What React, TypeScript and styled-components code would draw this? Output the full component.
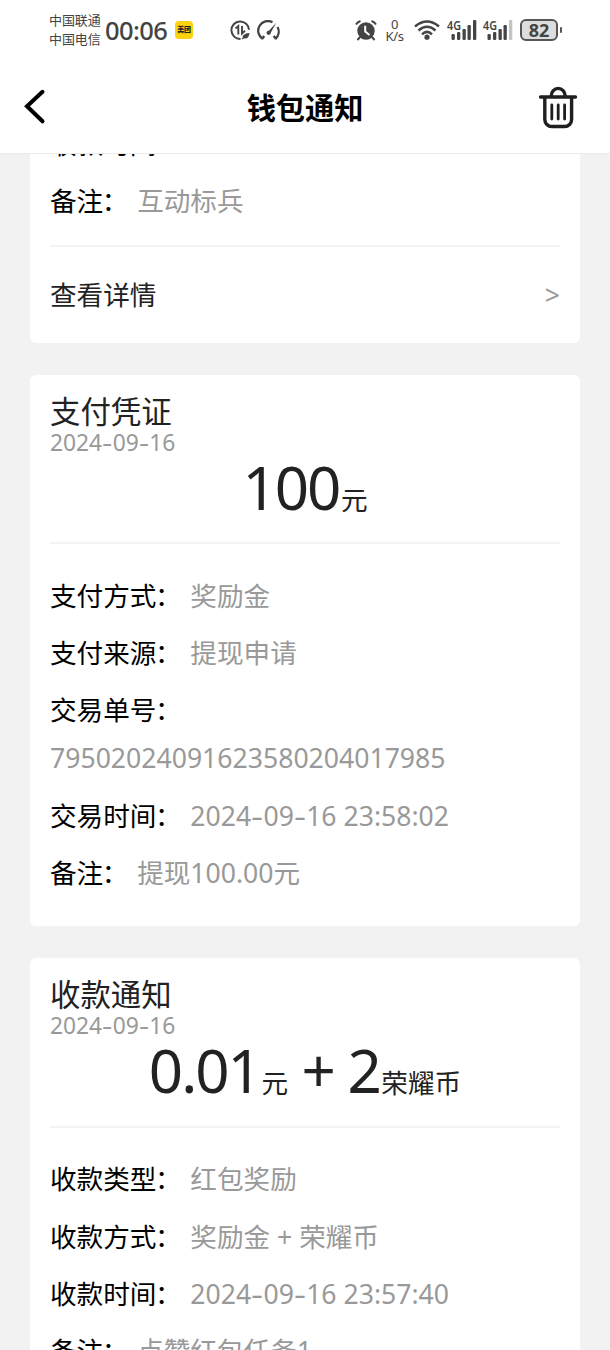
import React from "react";
import styled, { createGlobalStyle, css } from "styled-components";

const Global = createGlobalStyle`
  *{box-sizing:border-box}
  html,body,#root{margin:0;height:100%;}
  body{background:#f2f2f2;overflow:hidden;font-family:"Noto Sans","Noto Sans CJK SC",sans-serif;color:#000;}
`;
const Screen = styled.div`width:610px;height:1350px;display:flex;flex-direction:column;overflow:hidden;background:#f2f2f2;`;
const StatusBar = styled.div`height:60px;flex:none;background:#fff;display:flex;align-items:center;padding:0 48px 0 49px;color:#444;`;
const Carriers = styled.div`font-size:13px;line-height:19px;width:56px;white-space:nowrap;letter-spacing:-.1px;`;
const Clock = styled.div`font-size:25.5px;line-height:30px;width:70px;letter-spacing:-.6px;white-space:nowrap;font-weight:500;`;
const AppBadge = styled.div`width:18px;height:18px;border-radius:4px;background:#fbd20d;color:#222;font-size:7px;font-weight:900;line-height:18px;text-align:center;white-space:nowrap;letter-spacing:-.2px;`;
const LeftIcons = styled.div`display:flex;gap:6px;margin-left:36.5px;`;
const RightIcons = styled.div`display:flex;align-items:center;margin-left:auto;`;
const Speed = styled.div`width:22px;margin:0 2px 0 7px;font-size:13px;line-height:12px;text-align:center;letter-spacing:-.3px;`;
const Network = styled.svg`display:block;margin-left:6.5px;overflow:visible;`;
const BatteryText = styled.div`width:38px;height:22px;border:2px solid #555;border-radius:6px;background:#ddd;font-size:18px;line-height:18px;font-weight:700;text-align:center;margin-left:7px;`;
const BatteryTip = styled.div`width:2px;height:6px;border-radius:1px;background:#555;margin-left:2px;`;
const NavBar = styled.header`height:94px;flex:none;background:#fff;border-bottom:1px solid #ececec;display:grid;grid-template-columns:80px 1fr 80px;align-items:center;`;
const NavTitle = styled.h1`margin:0;padding-top:2px;font-size:29.2px;line-height:40px;font-weight:700;text-align:center;`;
const NavIcon = styled.svg`display:block;fill:none;`;
const List = styled.main`flex:1;min-height:0;overflow:hidden;padding:0 30px;display:flex;flex-direction:column;gap:32px;`;
const Card = styled.section<{ $continued?: boolean }>`
  flex:none;background:#fff;border-radius:6px;padding:17px 20px 20px;
  ${p => p.$continued && css`margin-top:-34.5px;padding-top:0;padding-bottom:0;`}
`;
const CardTitle = styled.h2`margin:0;font-size:30.4px;line-height:40px;font-weight:400;color:#222;`;
const CardDate = styled.div`font-size:22.8px;line-height:22px;color:#999;`;
const Amount = styled.div`height:68px;display:flex;justify-content:center;align-items:baseline;color:#222;font-size:60px;line-height:66px;letter-spacing:-2px;white-space:pre;`;
const Unit = styled.span`font-size:26.6px;letter-spacing:0;margin-left:1.5px;`;
const Rule = styled.hr<{ $compact?: boolean }>`
  border:0;height:2px;background:#f4f4f4;
  margin:${p => (p.$compact ? "20px 0 0" : "20.5px 0 27.5px")};
`;
const Row = styled.div`margin-bottom:9.3px;font-size:26.6px;line-height:48px;`;
const Label = styled.span`color:#000;margin-right:7.4px;`;
const Colon = styled.span`margin:0 1.5px 0 -1.5px;`;
const Value = styled.span`color:#999;`;
const Dash = styled.span`display:inline-block;width:.46em;text-align:center;transform:scaleX(1.4);`;
const Detail = styled.div`height:96px;display:flex;justify-content:space-between;align-items:center;font-size:26.6px;line-height:40px;color:#222;`;

const dashed = (text: string) =>
  text.split("-").map((part, i) => <React.Fragment key={i}>{i > 0 && <Dash>-</Dash>}{part}</React.Fragment>);

const Field = ({ label, value }: { label: string; value?: string }) => (
  <Row><Label>{label}<Colon>：</Colon></Label>{value && <Value>{dashed(value)}</Value>}</Row>
);

const Signal = ({ weak }: { weak?: boolean }) => (
  <Network width="30" height="20" viewBox="0 0 30 20">
    <text x="0" y="9.5" fontSize="12" fontWeight="600" fill="#444" textLength="14" lengthAdjust="spacingAndGlyphs">4G</text>
    {[[4.5, 14], [10, 12], [15.5, 9], [20.5, 5], [26, 0]].map(([x, y], i) => (
      <rect key={i} x={x} y={y} width="3.3" height={20 - y} rx="1.2" fill={weak && i === 4 ? "#c4c4c4" : "#444"} />
    ))}
  </Network>
);

export default function App() {
  return (
    <Screen>
      <Global />
      <StatusBar>
        <Carriers>中国联通<br />中国电信</Carriers>
        <Clock>00:06</Clock>
        <AppBadge>美团</AppBadge>
        <LeftIcons>
          <svg width="21" height="21" viewBox="0 0 21 21" fill="none" stroke="#444" strokeWidth="2">
            <path d="M19 9.800A8.800 8.800 0 1 0 10.500 19" />
            <path d="M5.500 8.500 8.300 6V14.500M12 6v7.500L15 10.800" strokeWidth="1.900" />
            <path d="M12.500 16.800q1.500-3.800 7-3.800-.5 6-5.500 5.500z" fill="#444" stroke="none" />
            <path d="m12 19 4-3.200" strokeWidth="1.200" />
          </svg>
          <svg width="24" height="21" viewBox="0 0 24 21" fill="none" stroke="#444" strokeWidth="2.300">
            <path d="M5.500 18.800A9.700 9.700 0 0 1 15.500 2.200M20.500 7A9.700 9.700 0 0 1 18.500 18.800M5 19l2.300-3M19 19l-2.300-3" />
            <path d="M10 12.800 19.500 2.500 13 14z" fill="#444" stroke="none" /><circle cx="11.600" cy="12.800" r="2.100" fill="#444" stroke="none" />
          </svg>
        </LeftIcons>
        <RightIcons>
          <svg width="22" height="21" viewBox="0 0 22 21">
            <circle cx="11" cy="11" r="8.700" fill="#444" />
            <path d="M1 4.500Q2.500 2 5.500 1M16.500 1Q19.500 2 21 4.500M5 17l-2.500 3M17 17l2.500 3" stroke="#444" strokeWidth="2" fill="none" />
            <path d="M10.200 5.800v5.700l4.300 3.500" stroke="#fff" strokeWidth="2" fill="none" />
          </svg>
          <Speed>0<br />K/s</Speed>
          <Network width="26" height="20" viewBox="0 0 26 20" fill="none" stroke="#444" strokeWidth="2.500">
            <path d="M1 6.500Q13-3.500 25 6.500M4.500 10.500Q13 3 21.500 10.500M8 14.300Q13 9.500 18 14.300" /><circle cx="13" cy="17.200" r="2.600" fill="#444" stroke="none" />
          </Network>
          <Signal /><Signal weak />
          <BatteryText>82</BatteryText><BatteryTip />
        </RightIcons>
      </StatusBar>
      <NavBar>
        <NavIcon width="80" height="61" viewBox="0 0 80 61" stroke="#000" strokeWidth="4" strokeLinecap="round">
          <path d="M42.500 15.800 27 30.300l15.500 15" />
        </NavIcon>
        <NavTitle>钱包通知</NavTitle>
        <NavIcon width="80" height="61" viewBox="0 0 80 61" stroke="#1f1f1f" strokeWidth="3.400" strokeLinecap="round">
          <path d="M10.500 21h35M14.800 21v22.500a7 7 0 0 0 7 7h12.800a7 7 0 0 0 7-7V21M21.200 20a7 7.600 0 0 1 14 0" />
          <path d="M21.800 29v14M28.200 29v14M34.600 29v14" strokeWidth="2.800" />
        </NavIcon>
      </NavBar>
      <List>
        <Card $continued>
          <Field label="收款时间" />
          <Field label="备注" value="互动标兵" />
          <Rule $compact />
          <Detail><span>查看详情</span><Value>&gt;</Value></Detail>
        </Card>
        <Card>
          <CardTitle>支付凭证</CardTitle>
          <CardDate>{dashed("2024-09-16")}</CardDate>
          <Amount>100<Unit>元</Unit></Amount>
          <Rule />
          <Field label="支付方式" value="奖励金" />
          <Field label="支付来源" value="提现申请" />
          <Field label="交易单号" value="79502024091623580204017985" />
          <Field label="交易时间" value="2024-09-16 23:58:02" />
          <Field label="备注" value="提现100.00元" />
        </Card>
        <Card>
          <CardTitle>收款通知</CardTitle>
          <CardDate>{dashed("2024-09-16")}</CardDate>
          <Amount>0.01<Unit>元</Unit> + 2<Unit>荣耀币</Unit></Amount>
          <Rule />
          <Field label="收款类型" value="红包奖励" />
          <Field label="收款方式" value="奖励金 + 荣耀币" />
          <Field label="收款时间" value="2024-09-16 23:57:40" />
          <Field label="备注" value="点赞红包任务1" />
        </Card>
      </List>
    </Screen>
  );
}
